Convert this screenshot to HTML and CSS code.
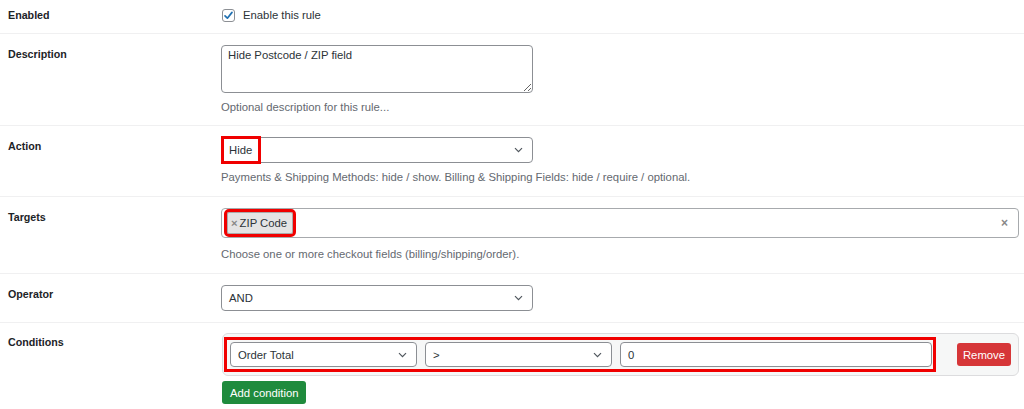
FILE: index.html
```html
<!DOCTYPE html>
<html lang="en">
<head>
    <meta charset="UTF-8">
    <meta name="viewport" content="width=device-width, initial-scale=1.0">
    <title>Edit checkout rule</title>
    <link rel="stylesheet" href="styles.css">
</head>
<body>
    <div class="rule-form">
        <div class="row row-first">
            <div class="label">Enabled</div>
            <div class="field">
                <label class="check">
                    <span class="check-box">
                        <svg width="11" height="11" viewBox="0 0 11 11"><path d="M2 5.8 L4.4 8.2 L9 2.4" fill="none" stroke="#2271b1" stroke-width="1.7" stroke-linecap="round" stroke-linejoin="round"/></svg>
                    </span>
                    Enable this rule
                </label>
            </div>
        </div>

        <div class="row row-desc">
            <div class="label">Description</div>
            <div class="field">
                <textarea class="textarea">Hide Postcode / ZIP field</textarea>
                <p class="help">Optional description for this rule...</p>
            </div>
        </div>

        <div class="row">
            <div class="label">Action</div>
            <div class="field">
                <div class="select short">
                    <span>Hide</span>
                    <svg width="9" height="6" viewBox="0 0 9 6"><path d="M1 1.2 L4.5 4.7 L8 1.2" fill="none" stroke="#50575e" stroke-width="1.2"/></svg>
                    <span class="mark mark-hide"></span>
                </div>
                <p class="help">Payments &amp; Shipping Methods: hide / show. Billing &amp; Shipping Fields: hide / require / optional.</p>
            </div>
        </div>

        <div class="row row-targets">
            <div class="label">Targets</div>
            <div class="field">
                <div class="multi">
                    <span class="chip"><span class="chip-x">×</span>ZIP Code</span>
                    <span class="clear">×</span>
                </div>
                <p class="help">Choose one or more checkout fields (billing/shipping/order).</p>
            </div>
        </div>

        <div class="row row-operator">
            <div class="label">Operator</div>
            <div class="field">
                <div class="select short">
                    <span>AND</span>
                    <svg width="9" height="6" viewBox="0 0 9 6"><path d="M1 1.2 L4.5 4.7 L8 1.2" fill="none" stroke="#50575e" stroke-width="1.2"/></svg>
                </div>
            </div>
        </div>

        <div class="row row-last">
            <div class="label">Conditions</div>
            <div class="field">
                <div class="conditions">
                    <div class="cond-group">
                        <div class="select cond">
                            <span>Order Total</span>
                            <svg width="9" height="6" viewBox="0 0 9 6"><path d="M1 1.2 L4.5 4.7 L8 1.2" fill="none" stroke="#50575e" stroke-width="1.2"/></svg>
                        </div>
                        <div class="select cond">
                            <span>&gt;</span>
                            <svg width="9" height="6" viewBox="0 0 9 6"><path d="M1 1.2 L4.5 4.7 L8 1.2" fill="none" stroke="#50575e" stroke-width="1.2"/></svg>
                        </div>
                        <div class="input">0</div>
                    </div>
                    <button class="btn btn-remove">Remove</button>
                </div>
                <button class="btn btn-add">Add condition</button>
            </div>
        </div>
    </div>
</body>
</html>
```

FILE: styles.css
```css
body {
    margin: 0;
    background: #fff;
    font-family: "Liberation Sans", Arial, sans-serif;
    font-size: 11.3px;
    color: #2c3338;
}

.row {
    display: grid;
    grid-template-columns: 213px 1fr;
    padding: 11px 5px 10px 8px;
    border-bottom: 1px solid #f0f0f1;
}

.row-first {
    padding-top: 7px;
}

.row-desc {
    padding-bottom: 9px;
}

.row-operator {
    padding-bottom: 11px;
}

.row-last {
    padding-top: 10px;
    border-bottom: none;
}

.label {
    font-size: 10.7px;
    font-weight: bold;
    color: #1d2327;
    line-height: 18px;
}

.row-first .label {
    line-height: 16px;
}

.check {
    display: flex;
    align-items: center;
    gap: 8px;
    line-height: 16px;
    color: #2c3338;
}

.check-box {
    width: 11px;
    height: 11px;
    margin-left: 1px;
    border: 1px solid #8c8f94;
    border-radius: 3px;
    display: flex;
    align-items: center;
    justify-content: center;
}

.textarea {
    display: block;
    box-sizing: border-box;
    width: 312px;
    height: 48px;
    margin: 0;
    padding: 1px 6px;
    border: 1px solid #8c8f94;
    border-radius: 4px;
    font-family: "Liberation Sans", Arial, sans-serif;
    font-size: 11.3px;
    line-height: 16px;
    color: #2c3338;
    resize: vertical;
}

.help {
    margin: 5px 0 0;
    line-height: 18px;
    color: #646970;
}

.row-targets .help {
    margin-top: 7px;
}

.select {
    position: relative;
    box-sizing: border-box;
    height: 26px;
    padding: 0 9px 0 7px;
    border: 1px solid #8c8f94;
    border-radius: 4px;
    background: #fff;
    display: flex;
    align-items: center;
    justify-content: space-between;
    color: #2c3338;
}

.select.short {
    width: 312px;
}

.mark {
    position: absolute;
    border: 3px solid #f00000;
}

.mark-hide {
    left: -1px;
    top: -2px;
    width: 34px;
    height: 22px;
}

.multi {
    box-sizing: border-box;
    height: 30px;
    padding: 0 10px 0 5px;
    border: 1px solid #a7aaad;
    border-radius: 4px;
    display: flex;
    align-items: center;
    justify-content: space-between;
}

.chip {
    display: flex;
    align-items: center;
    height: 20px;
    padding: 0 5px 0 3px;
    background: #e4e4e4;
    border: 1px solid #aaa;
    border-radius: 2px;
    outline: 3px solid #f00000;
    color: #2c3338;
}

.chip-x {
    color: #888;
    font-weight: bold;
    margin-right: 2px;
}

.clear {
    color: #888;
    font-weight: bold;
    font-size: 12px;
}

.conditions {
    box-sizing: border-box;
    height: 43px;
    margin-left: 1px;
    padding: 3px 7px 3px 1px;
    background: #f6f7f7;
    border: 1px solid #dcdcde;
    border-radius: 6px;
    display: flex;
    align-items: center;
    justify-content: space-between;
}

.cond-group {
    box-sizing: border-box;
    width: 712px;
    padding: 2px 1px 2px 3px;
    border: 3px solid #f00000;
    display: flex;
    gap: 8px;
}

.select.cond {
    width: 187px;
    height: 25px;
}

.input {
    flex: 1;
    box-sizing: border-box;
    height: 25px;
    padding: 0 7px;
    border: 1px solid #8c8f94;
    border-radius: 4px;
    background: #fff;
    display: flex;
    align-items: center;
}

.btn {
    border: none;
    color: #fff;
    font-family: "Liberation Sans", Arial, sans-serif;
    font-size: 11.3px;
    height: 23px;
    border-radius: 3px;
    cursor: pointer;
}

.btn-remove {
    width: 54px;
    padding: 0;
    background: #d63638;
}

.btn-add {
    display: block;
    margin: 5px 0 0 1px;
    padding: 0 8px;
    background: #1f8b3d;
}
```
